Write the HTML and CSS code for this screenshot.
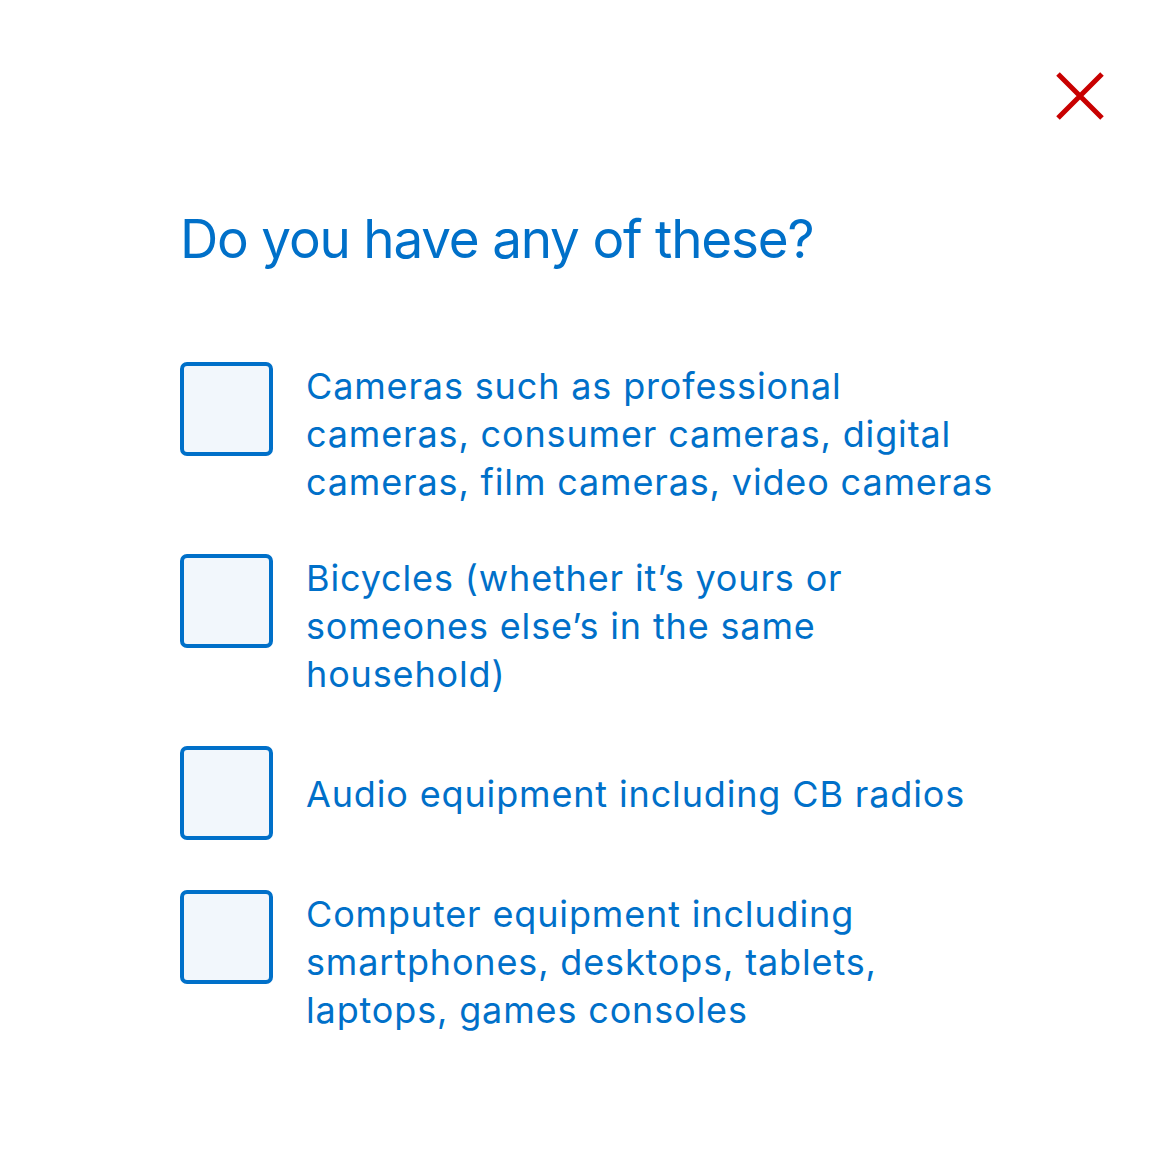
FILE: index.html
```html
<!DOCTYPE html>
<html>
<head>
<meta charset="utf-8">
<link rel="stylesheet" href="styles.css">
</head>
<body>
<div class="page">
  <div class="topbar">
    <button class="close" aria-label="Close">
      <svg width="48" height="48" viewBox="0 0 48 48"><path d="M2 2 L46 46 M46 2 L2 46" stroke="#c80000" stroke-width="5" fill="none"/></svg>
    </button>
  </div>
  <div class="content">
    <h1 class="title">Do you have any of these?</h1>
    <ul class="options">
      <li class="option"><span class="box"></span><span class="label">Cameras such as professional cameras, consumer cameras, digital cameras, film cameras, video cameras</span></li>
      <li class="option"><span class="box"></span><span class="label">Bicycles (whether it’s yours or someones else’s in the same household)</span></li>
      <li class="option"><span class="box"></span><span class="label">Audio equipment including CB radios</span></li>
      <li class="option"><span class="box"></span><span class="label">Computer equipment including smartphones, desktops, tablets, laptops, games consoles</span></li>
    </ul>
  </div>
</div>
</body>
</html>
```
FILE: styles.css
```css
html, body {
  margin: 0;
  padding: 0;
  background: #ffffff;
}
body {
  font-family: Inter, "Noto Sans", sans-serif;
  color: #0070c9;
}
.page {
  width: 1176px;
  height: 1176px;
}
.topbar {
  display: flex;
  justify-content: flex-end;
  padding: 72px 72px 0 0;
}
.close {
  border: 0;
  background: none;
  padding: 0;
  width: 48px;
  height: 48px;
  display: block;
}
.close svg { display: block; }
.content {
  padding-left: 180px;
  width: 860px;
}
.title {
  margin: 87px 0 0 0;
  font-size: 53px;
  line-height: 64px;
  font-weight: 400;
  letter-spacing: -1.2px;
}
.options {
  list-style: none;
  margin: 91px 0 0 0;
  padding: 0;
  display: flex;
  flex-direction: column;
  gap: 48px;
}
.option {
  display: flex;
  align-items: flex-start;
  gap: 33px;
}
.box {
  flex: none;
  width: 93px;
  height: 94px;
  box-sizing: border-box;
  border: 4px solid #0070c9;
  border-radius: 7px;
  background: #f2f7fc;
}
.label {
  display: flex;
  align-items: center;
  min-height: 96px;
  font-size: 36px;
  line-height: 48px;
  letter-spacing: 0.85px;
  width: 690px;
}
```
